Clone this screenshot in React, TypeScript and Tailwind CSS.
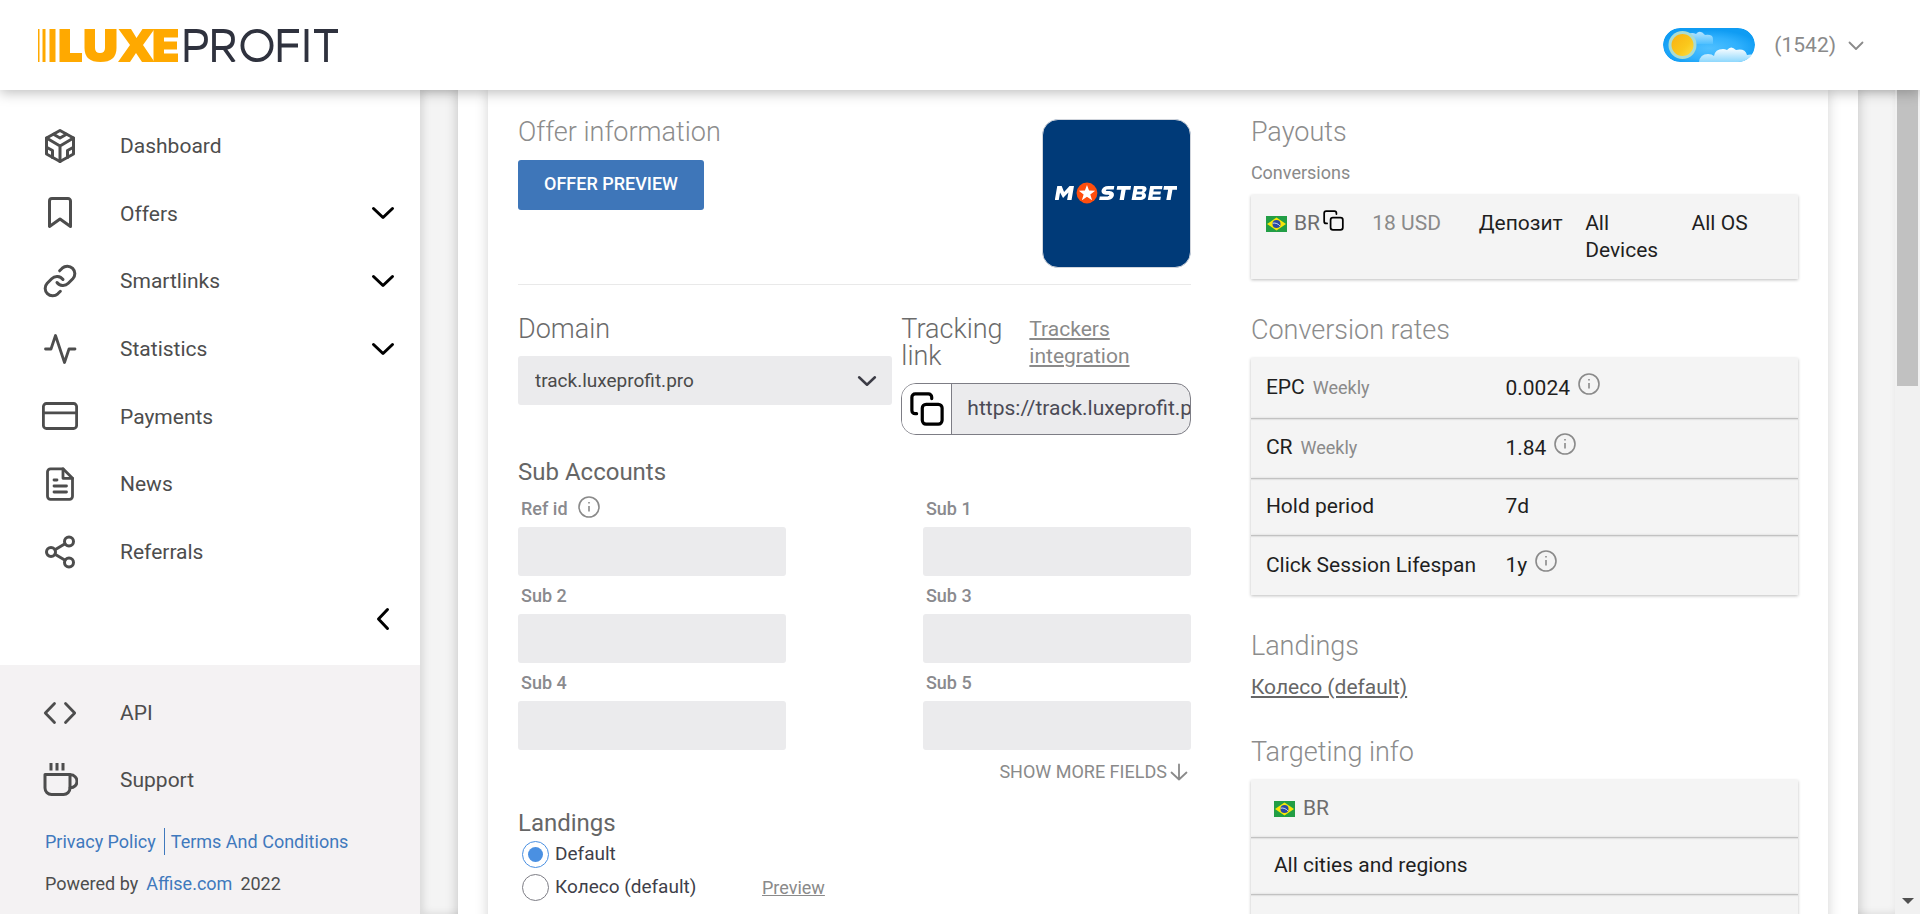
import React, { useState } from "react";

const stroke = {
  fill: "none",
  stroke: "currentColor",
  strokeLinecap: "round" as const,
  strokeLinejoin: "round" as const,
};

type IconProps = { className?: string };

const Svg = ({ children, w = 3 }: { children: React.ReactNode; w?: number }) => (
  <svg viewBox="0 0 36 36" className="size-9 shrink-0" {...stroke} strokeWidth={w} aria-hidden="true">
    {children}
  </svg>
);

const DashboardIcon = () => (
  <Svg w={3}>
    <path d="M18 2.500 31.500 10v16L18 33.500 4.500 26V10z" />
    <path d="M4.500 10 18 18l13.500-8M18 18v15.500" />
    <path d="M11.500 6.200 18 10l6.500-3.800M5 19.500l5.500 3v7M31 19.500l-5.500 3v7" />
  </Svg>
);
const BookmarkIcon = () => (
  <Svg>
    <path d="M7.500 31.500V6a2.500 2.500 0 0 1 2.500-2.500h16A2.500 2.500 0 0 1 28.500 6v25.500L18 24z" />
  </Svg>
);
const LinkIcon = () => (
  <Svg>
    <path d="M15 19.500a7.500 7.500 0 0 0 11.310.810l4.500-4.500a7.500 7.500 0 0 0-10.600-10.600L17.630 7.800" />
    <path d="M21 16.500a7.500 7.500 0 0 0-11.310-.810l-4.500 4.500a7.500 7.500 0 0 0 10.600 10.600l2.570-2.570" />
  </Svg>
);
const StatsIcon = () => (
  <Svg w={2.8}>
    <path d="M3.500 18h5.500l4.500-13.500 9 27L27 18h6" />
  </Svg>
);
const CardIcon = () => (
  <Svg w={2.8}>
    <rect x="1.400" y="5.500" width="33.200" height="25" rx="3" />
    <path d="M1.500 14.800h33" />
  </Svg>
);
const NewsIcon = () => (
  <Svg w={2.8}>
    <path d="M21 2.800H8.500a3 3 0 0 0-3 3v24.500a3 3 0 0 0 3 3h19a3 3 0 0 0 3-3V12.300z" />
    <path d="M21 2.800v9.500h9.500M12 14h3M12 20h12.500M12 26h12.500" />
  </Svg>
);
const ShareIcon = () => (
  <Svg w={3}>
    <circle cx="27" cy="7.500" r="4.500" />
    <circle cx="9" cy="18" r="4.500" />
    <circle cx="27" cy="28.500" r="4.500" />
    <path d="m13 20.300 10.100 5.900M23 9.800 13 15.700" />
  </Svg>
);
const CodeIcon = () => (
  <Svg w={2.8}>
    <path d="M12.500 8.500 3.300 18l9.200 9.500M23.500 8.500l9.200 9.500-9.200 9.500" />
  </Svg>
);
const CupIcon = () => (
  <Svg w={3}>
    <path d="M3 12.500h25v13.500a6.500 6.500 0 0 1-6.500 6.500h-12A6.500 6.500 0 0 1 3 26z" />
    <path d="M28 12.800h.500a6.500 6.500 0 0 1 0 13H28" />
    <path d="M9 1v7.500M15 1v7.500M21 1v7.500" strokeLinecap="butt" />
  </Svg>
);

const Chevron = ({ className = "" }: IconProps) => (
  <svg viewBox="0 0 24 14" className={className} {...stroke} strokeWidth={3} aria-hidden="true">
    <path d="M2.500 2.500 12 11.500l9.500-9" />
  </svg>
);

const CopyIcon = ({ className = "", w = 3.4 }: IconProps & { w?: number }) => (
  <svg viewBox="0 0 36 36" className={className} {...stroke} strokeWidth={w} aria-hidden="true">
    <rect x="13" y="13" width="21" height="21" rx="4" />
    <path d="M7 23H5.500a3.500 3.500 0 0 1-3.500-3.500v-14A3.500 3.500 0 0 1 5.500 2h14A3.500 3.500 0 0 1 23 5.500V7" />
  </svg>
);

const InfoIcon = () => (
  <svg viewBox="0 0 22 22" className="size-[22px] shrink-0 text-[#8a8a8a]" {...stroke} strokeWidth={1.6} aria-hidden="true">
    <circle cx="11" cy="11" r="10" />
    <path d="M11 10v5.500M11 6v1.400" strokeLinecap="butt" />
  </svg>
);

const Flag = () => (
  <svg viewBox="0 0 21 16" className="h-4 w-[21px] shrink-0" role="img" aria-label="Brazil">
    <rect width="21" height="16" fill="#229e45" />
    <path d="M10.500 1.600 20 8l-9.500 6.400L1 8z" fill="#f8e509" />
    <circle cx="10.500" cy="8" r="4" fill="#2b49a3" />
    <path d="M6.700 7.200c2.800-.600 5.600.600 7.200 2.700" fill="none" stroke="#fff" strokeWidth=".8" />
  </svg>
);

const Logo = () => (
  <a href="#" aria-label="LuxeProfit" className="block">
    <svg viewBox="0 0 300 33" className="h-[33px] w-[300px]">
      <g fill="#ffa900">
        <rect x="0" width="1.500" height="33" />
        <rect x="4.500" width="3" height="33" />
        <rect x="11.500" width="6" height="33" />
        <path d="M21.500 0H32v24h12v9H21.500z" />
        <path d="M46.500 0H57v19q0 5 5 5t5-5V0h11.500v19q0 14-16 14T46.500 19z" />
        <path d="M80.500 0h12.500l5.500 9 6-9h12l-11.500 16L116.500 33H104l-6-9-6 9H80L92 16z" />
        <path d="M115.500 0H140v8.500h-14v4h13v8h-13v4h14V33h-24.500z" />
      </g>
      <g fill="none" stroke="#2f323e" strokeWidth="3.800">
        <path d="M148.500 33V2h10q9.500 0 9.500 8.500T158.500 19h-10" />
        <path d="M176 33V2h9.500q9.500 0 9.500 8.500T185.500 19H176M186 19l10 14" />
        <circle cx="219" cy="16.500" r="14.600" />
        <path d="M241.700 33V2H261M242 16.500h18M268.500 0v33M276 2h24M288 2v31" />
      </g>
    </svg>
  </a>
);

const ThemeToggle = () => (
  <button type="button" aria-label="Switch theme" className="overflow-hidden rounded-full">
    <svg viewBox="0 0 92 34" className="block h-[34px] w-[92px]" aria-hidden="true">
      <defs>
        <radialGradient id="sky" cx=".5" cy=".6" r=".55">
          <stop offset="0" stopColor="#4fc0ff" />
          <stop offset=".6" stopColor="#2fb0fd" />
          <stop offset="1" stopColor="#0f9cf3" />
        </radialGradient>
        <linearGradient id="sun" x1="0" y1="0" x2="1" y2="1">
          <stop offset="0" stopColor="#f9b012" />
          <stop offset=".6" stopColor="#fac81c" />
          <stop offset="1" stopColor="#fde047" />
        </linearGradient>
        <linearGradient id="cloud" x1="0" y1="0" x2="0" y2="1">
          <stop offset="0" stopColor="#ffffff" />
          <stop offset="1" stopColor="#8fd8fd" />
        </linearGradient>
        <linearGradient id="haze" x1="0" y1="0" x2="0" y2="1">
          <stop offset="0" stopColor="#b9e5fe" />
          <stop offset="1" stopColor="#4fc0ff" />
        </linearGradient>
      </defs>
      <rect width="92" height="34" rx="17" fill="url(#sky)" />
      <path d="M26 6q3-2 7 0 4-5 9 1 8-1 8 4v5H30z" fill="url(#haze)" />
      <path d="M36 34q1-8 9-8 4 0 6 2 1-7 9-7 2 0 4 1 4-5 9 0 9-2 11 5 3-1 8 0l-8 7z" fill="url(#cloud)" />
      <circle cx="19.500" cy="17" r="14" fill="#a9dcd2" />
      <circle cx="19.500" cy="17" r="11" fill="url(#sun)" />
    </svg>
  </button>
);

const MostbetLogo = () => (
  <div className="flex size-[149px] items-center justify-center overflow-hidden rounded-2xl border border-gray-300 bg-[#003a78] pb-0.5">
    <svg viewBox="0 0 124 22" className="h-[22px] w-[122px]" role="img" aria-label="Mostbet">
      <g fill="#fff" transform="translate(3 0) skewX(-10)">
        <path d="M0 4h4.500l3.500 6 4.500-6H17v14h-4.500v-7.500L8 16l-4-5.500V18H0z" />
        <path d="M58 7.500h-6c-2.500 0-2.500 1.500 0 1.500h2c7 0 7 9 0 9H45v-3.500h8c2 0 2-1.700 0-1.700h-2C44 12.800 44 4 52 4h6z" />
        <path d="M61 4h14v3.600h-4.800V18h-4.400V7.600H61z" />
        <path fillRule="evenodd" d="M78 4h9c5 0 5.500 5 2.500 6.700C93.500 12.500 92.500 18 87.500 18H78zm4 3.200v2.200h4.500c1.200 0 1.200-2.200 0-2.200zm0 5.300v2.300h4.800c1.300 0 1.300-2.300 0-2.300z" />
        <path d="M94.500 4H107v3.300h-8.300v2.200h7.600v3h-7.600v2.200h8.500V18H94.500z" />
        <path d="M108.500 4h14v3.600h-4.800V18h-4.400V7.600h-4.800z" />
      </g>
      <circle cx="32.500" cy="11" r="10.600" fill="#ff4e0d" />
      <path d="m32.500 2.800 2.100 5.700 6.200.2-4.900 3.800 1.800 5.900-5.200-3.500-5.200 3.500 1.800-5.900-4.900-3.800 6.200-.2z" fill="#fff" />
    </svg>
  </div>
);

const NAV = [
  { label: "Dashboard", icon: <DashboardIcon />, more: false },
  { label: "Offers", icon: <BookmarkIcon />, more: true },
  { label: "Smartlinks", icon: <LinkIcon />, more: true },
  { label: "Statistics", icon: <StatsIcon />, more: true },
  { label: "Payments", icon: <CardIcon />, more: false },
  { label: "News", icon: <NewsIcon />, more: false },
  { label: "Referrals", icon: <ShareIcon />, more: false },
];

const NavItem = ({ label, icon, more = false }: { label: string; icon: React.ReactNode; more?: boolean }) => (
  <a href="#" className="flex items-center pr-[25px] pl-[42px] text-[21px] text-[#4d4d4d]">
    {icon}
    <span className="ml-[42px] flex-1 pt-0.5">{label}</span>
    {more && <Chevron className="h-[14px] w-6 text-black" />}
  </a>
);

const Sidebar = () => (
  <aside className="flex w-[420px] shrink-0 flex-col bg-white">
    <nav className="grid h-[575px] grid-rows-8 pt-[22px] pb-3">
      {NAV.map((n) => (
        <NavItem key={n.label} {...n} />
      ))}
      <div className="flex items-center justify-end pr-[25px]">
        <button type="button" aria-label="Collapse menu" className="flex size-6 items-center justify-center">
          <Chevron className="h-[14px] w-6 shrink-0 rotate-90" />
        </button>
      </div>
    </nav>
    <div className="flex-1 bg-[#f4f2f3] pt-3.5 text-lg text-[#4d4d4d]">
      <div className="grid grid-rows-2 [&>a]:h-[67px]">
        <NavItem label="API" icon={<CodeIcon />} />
        <NavItem label="Support" icon={<CupIcon />} />
      </div>
      <div className="mt-[15px] flex items-center pl-[45px] leading-[27px] text-[#3f79bd]">
        <a href="#" className="border-r border-[#3f79bd] pr-2">Privacy Policy</a>
        <a href="#" className="pl-1.5">Terms And Conditions</a>
      </div>
      <p className="mt-[15px] flex gap-2 pl-[45px] leading-[27px]">
        Powered by
        <a href="#" className="text-[#3f79bd]">Affise.com</a>
        2022
      </p>
    </div>
  </aside>
);

const Heading = ({ children, className = "text-[#8c8c8c]" }: { children: React.ReactNode; className?: string }) => (
  <h2 className={`text-[27px] leading-[27px] font-light ${className}`}>{children}</h2>
);

const SubField = ({ id, label, info = false }: { id: string; label: string; info?: boolean }) => (
  <div className="w-[268px]">
    <label htmlFor={id} className="flex h-[38px] items-center gap-2.5 pt-0.5 pl-[3px] text-lg font-medium text-[#8a8a8e]">
      {label}
      {info && (
        <span className="pb-1">
          <InfoIcon />
        </span>
      )}
    </label>
    <input id={id} type="text" className="block h-[49px] w-full rounded-[3px] bg-[#ebebed] px-4 outline-none" />
  </div>
);

const OfferPanel = () => {
  const [landing, setLanding] = useState("default");
  return (
    <section className="min-w-0">
      <div className="flex justify-between border-b border-[#e9e9e9] pb-4">
        <div>
          <Heading>Offer information</Heading>
          <button type="button" className="mt-3.5 h-[50px] rounded-[3px] bg-[#3e76b9] px-[26px] pb-[3px] text-lg font-medium text-white">
            OFFER PREVIEW
          </button>
        </div>
        <MostbetLogo />
      </div>

      <div className="mt-[31px] grid grid-cols-[375fr_290fr] gap-[9px]">
        <div>
          <label htmlFor="domain">
            <Heading className="text-[#6b6b6b]">Domain</Heading>
          </label>
          <div className="mt-[13px] grid items-center">
            <select id="domain" className="col-start-1 row-start-1 h-[49px] w-full appearance-none rounded-[3px] bg-[#ebebed] px-[17px] pt-0.5 text-[19px] text-[#4a4a4a] outline-none">
              <option>track.luxeprofit.pro</option>
            </select>
            <Chevron className="pointer-events-none col-start-1 row-start-1 mr-[15px] h-3 w-5 justify-self-end text-[#3c3c46]" />
          </div>
        </div>
        <div className="min-w-0">
          <div className="flex justify-between gap-[9px]">
            <div className="w-[119px]">
              <Heading className="text-[#6b6b6b]">Tracking link</Heading>
            </div>
            <a href="#" className="flex-1 pr-10 text-[21px] leading-[27px] text-[#8a8a8a] underline">
              Trackers integration
            </a>
          </div>
          <div className="mt-[13px] flex h-[52px] overflow-hidden rounded-[15px] border border-[#7d7d85] bg-[#ebebed]">
            <button type="button" aria-label="Copy link" className="flex w-[50px] shrink-0 items-center justify-center border-r border-[#7d7d85] bg-white">
              <CopyIcon className="size-[34px] text-black" />
            </button>
            <input
              type="text"
              readOnly
              aria-label="Tracking link"
              value="https://track.luxeprofit.pro/click"
              className="min-w-0 flex-1 bg-transparent pl-[15px] text-[21px] text-[#4a4a55] outline-none"
            />
          </div>
        </div>
      </div>

      <h3 className="mt-[22px] text-2xl leading-[30px] text-[#666]">Sub Accounts</h3>
      <div className="mt-0.5 grid grid-cols-[auto_auto] justify-between">
        <SubField id="ref" label="Ref id" info />
        <SubField id="s1" label="Sub 1" />
        <SubField id="s2" label="Sub 2" />
        <SubField id="s3" label="Sub 3" />
        <SubField id="s4" label="Sub 4" />
        <SubField id="s5" label="Sub 5" />
      </div>
      <div className="mt-2 flex justify-end pr-[3px]">
        <button type="button" className="flex items-center gap-[3px] text-lg leading-[27px] text-[#8a8a8a]">
          SHOW MORE FIELDS
          <svg viewBox="0 0 18 18" className="size-[18px]" {...stroke} strokeWidth={1.8} aria-hidden="true">
            <path d="M9 1.500v15M1.500 9.500 9 16.500l7.500-7" />
          </svg>
        </button>
      </div>

      <fieldset className="mt-[23px]">
        <legend className="text-2xl leading-[30px] text-[#666]">Landings</legend>
        {[
          { id: "default", label: "Default" },
          { id: "wheel", label: "Колесо (default)" },
        ].map((l) => (
          <div key={l.id} className="flex h-[33px] items-center">
            <label className="flex w-[244px] items-center gap-1.5 pl-1 text-[19px] text-[#3f3f4a]">
              <input
                type="radio"
                name="landing"
                checked={landing === l.id}
                onChange={() => setLanding(l.id)}
                className="size-[27px] appearance-none rounded-full border border-[#7d7d85] bg-white bg-clip-content p-[5px] checked:border-[#4a90e2] checked:bg-[#4a90e2]"
              />
              {l.label}
            </label>
            {l.id === "wheel" && (
              <a href="#" className="text-lg text-[#8a8a8a] underline">Preview</a>
            )}
          </div>
        ))}
      </fieldset>
    </section>
  );
};

const box = "bg-[#f4f4f4] shadow-[0_1px_3px_rgba(0,0,0,0.26)]";
const innerRow =
  "bg-[#f4f4f4] shadow-[0_1px_3px_rgba(0,0,0,0.26),inset_0_3px_2px_-2px_rgba(0,0,0,0.28)]";

const RATES = [
  { name: "EPC", period: "Weekly", value: "0.0024", info: true },
  { name: "CR", period: "Weekly", value: "1.84", info: true },
  { name: "Hold period", period: "", value: "7d", info: false },
  { name: "Click Session Lifespan", period: "", value: "1y", info: true },
];

const Details = () => (
  <section className="min-w-0 text-[21px] leading-[27px] text-[#1f1f1f]">
    <Heading>Payouts</Heading>
    <p className="mt-[13px] text-lg leading-[27px] text-[#8a8a8a]">Conversions</p>
    <div className={`mt-[9px] grid h-[84px] grid-cols-5 items-start pt-[15px] pl-[15px] ${box}`}>
      <div className="flex items-center text-[#6e6e6e]">
        <Flag />
        <span className="ml-[7px]">BR</span>
        <button type="button" aria-label="Copy" className="ml-[3px] pb-1.5">
          <CopyIcon className="block size-[21px] text-black" w={3} />
        </button>
      </div>
      <div className="text-[#8a8a8a]">18 USD</div>
      <div>Депозит</div>
      <div className="pr-4">All Devices</div>
      <div>All OS</div>
    </div>

    <div className="mt-[38px]">
      <Heading>Conversion rates</Heading>
    </div>
    <table className="mt-3.5 block">
      <tbody className="block">
        {RATES.map((r, i) => (
          <tr
            key={r.name}
            className={`grid grid-cols-[240fr_293fr] items-center pl-[15px] ${r.info ? "h-[60px]" : "h-[57px]"} ${i === 0 ? box : innerRow}`}
          >
            <td>
              {r.name}
              {r.period && <span className="ml-2 text-lg text-[#8a8a8a]">{r.period}</span>}
            </td>
            <td className="flex items-center gap-2">
              {r.value}
              {r.info && (
                <span className="pb-2">
                  <InfoIcon />
                </span>
              )}
            </td>
          </tr>
        ))}
      </tbody>
    </table>

    <div className="mt-[38px]">
      <Heading>Landings</Heading>
    </div>
    <a href="#" className="mt-3.5 block w-fit text-[#666] underline">Колесо (default)</a>

    <div className="mt-[38px]">
      <Heading>Targeting info</Heading>
    </div>
    <ul className="mt-3.5">
      <li className={`flex h-[57px] items-center gap-2 pl-[23px] text-[#6e6e6e] ${box}`}>
        <Flag />
        BR
      </li>
      <li className={`flex h-[57px] items-center pl-[23px] ${innerRow}`}>All cities and regions</li>
      <li className={`h-[57px] ${innerRow}`} />
    </ul>
  </section>
);

export default function App() {
  return (
    <div className="flex h-screen flex-col overflow-hidden bg-[#f4f4f4] font-['Roboto',sans-serif]">
      <header className="z-10 flex h-[90px] shrink-0 items-center justify-between bg-white pr-14 pl-[38px] shadow-[0_3px_12px_rgba(0,0,0,0.25)]">
        <Logo />
        <div className="flex items-center">
          <ThemeToggle />
          <button type="button" className="ml-[19px] flex items-center gap-3 pt-0.5 text-[21px] text-[#8a8a8a]">
            (1542)
            <svg viewBox="0 0 16 10" className="h-2.5 w-4" {...stroke} strokeWidth={1.8} aria-hidden="true">
              <path d="M1.500 1.500 8 8l6.500-6.500" />
            </svg>
          </button>
        </div>
      </header>
      <div className="flex min-h-0 flex-1">
        <Sidebar />
        <main className="min-w-0 flex-1 overflow-hidden pr-[37px] pl-[38px] shadow-[inset_3px_0_8px_rgba(0,0,0,0.12)]">
          <div className="bg-white px-[30px] shadow-[0_0_12px_rgba(0,0,0,0.22)]">
            <div className="grid min-h-[840px] grid-cols-[674fr_548fr] gap-[60px] bg-white px-[30px] pt-[29px] shadow-[0_0_12px_rgba(0,0,0,0.18)]">
              <OfferPanel />
              <Details />
            </div>
          </div>
        </main>
        <div className="flex w-[25px] shrink-0 flex-col items-center justify-between bg-[#f1f1f1] pb-2.5" aria-hidden="true">
          <div className="h-[296px] w-[21px] bg-[#c1c1c1]" />
          <svg viewBox="0 0 12 6" className="h-1.5 w-3">
            <path d="M0 0h12L6 6z" fill="#505050" />
          </svg>
        </div>
      </div>
    </div>
  );
}
